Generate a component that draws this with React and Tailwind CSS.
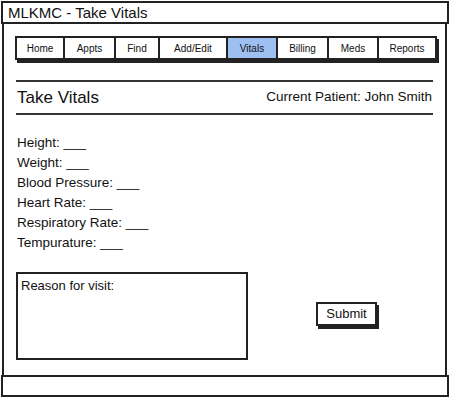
const tabs = [
  { label: "Home", w: "w-[50px]" },
  { label: "Appts", w: "w-[53px]" },
  { label: "Find", w: "w-[46px]" },
  { label: "Add/Edit", w: "w-[70px]" },
  { label: "Vitals", w: "w-[52px]", active: true },
  { label: "Billing", w: "w-[53px]" },
  { label: "Meds", w: "w-[52px]" },
  { label: "Reports", w: "w-[60px]" },
];

const fields = [
  "Height",
  "Weight",
  "Blood Pressure",
  "Heart Rate",
  "Respiratory Rate",
  "Tempurature",
];

export default function App() {
  return (
    <div className="w-[450px] h-[400px] bg-white text-[#111] flex flex-col font-['Comic_Sans_MS','Liberation_Sans',sans-serif]">
      <div className="mx-[1px] mt-[1px] h-[23px] border-2 border-[#222] flex items-center pl-[5px] text-[15px] leading-none">
        MLKMC - Take Vitals
      </div>

      <div className="ml-[2px] mr-[3px] flex-1 border-x-2 border-[#222] flex flex-col">
        <div className="flex ml-[11px] mt-[12px]">
          {tabs.map((t) => (
            <div
              key={t.label}
              className={`${t.w} h-[24px] border-2 border-[#222] -ml-[2px] first:ml-0 flex items-center justify-center text-[10px] shadow-[2px_3px_0_#222] ${t.active ? "bg-[#9ec0f0]" : "bg-white"}`}
            >
              {t.label}
            </div>
          ))}
        </div>

        <div className="mx-[12px] mt-[20px] border-y-2 border-[#333] h-[35px] flex items-center justify-between px-[1px]">
          <span className="text-[17px]">Take Vitals</span>
          <span className="text-[13.5px]">Current Patient: John Smith</span>
        </div>

        <div className="ml-[13px] mt-[19px] flex flex-col gap-[2px] text-[13.5px] leading-[18px]">
          {fields.map((f) => (
            <div key={f}>
              {f}: ___
            </div>
          ))}
        </div>

        <div className="ml-[12px] mt-[20px] flex items-start">
          <div className="w-[232px] h-[88px] border-2 border-[#222] px-[3px] pt-[2px] text-[13px]">
            Reason for visit:
          </div>
          <div className="ml-[68px] mt-[30px] w-[61px] h-[24px] border-2 border-[#222] bg-white flex items-center justify-center text-[13px] shadow-[2px_3px_0_#222]">
            Submit
          </div>
        </div>
      </div>

      <div className="mx-[1px] mb-[3px] h-[22px] border-2 border-[#222]" />
    </div>
  );
}
